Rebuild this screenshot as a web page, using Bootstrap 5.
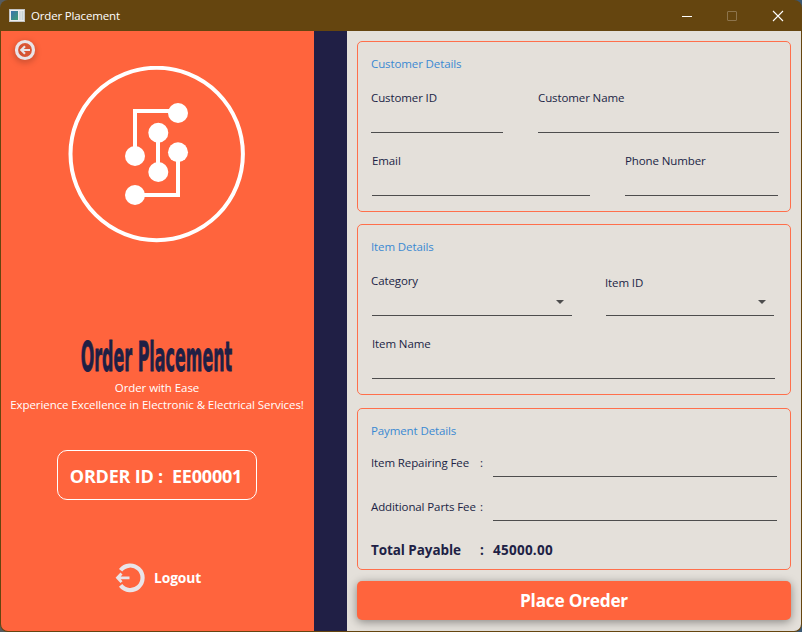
<!DOCTYPE html>
<html lang="en">
<head>
<meta charset="utf-8">
<meta name="viewport" content="width=device-width, initial-scale=1">
<title>Order Placement</title>
<link rel="stylesheet" href="https://cdn.jsdelivr.net/npm/bootstrap@5.3.0/dist/css/bootstrap.min.css">
<style>
:root{--coral:#ff643d;--ink:#201f45;--paper:#e4e0da;--frame:#65450f}
html,body{height:100%}
body{font:11.5px/16px "Open Sans","Noto Sans",sans-serif;letter-spacing:-.11px;color:var(--ink);background:linear-gradient(90deg,#565c60 0 50%,#3b5872 50%);overflow:hidden}
.app-window{width:802px;height:632px;background:var(--frame);border-radius:8px;padding:0 1px 1px}
.title-bar{height:31px;padding:0 17px 0 8px;color:#fff;letter-spacing:-.16px}
.title-bar .win-icon{margin-right:6px}
.win-controls{gap:34px}
.win-controls svg:first-child{margin-right:-1px}
.app-body{height:600px;border-radius:0 0 7px 7px}
.side-panel{width:313px;background:var(--coral);color:#fff}
.divider-band{width:33px;background:var(--ink)}
.form-panel{width:454px;background:var(--paper);padding:10px}
.back-btn{margin:5px 0 0 10px;width:28px;height:28px}
.back-btn svg{filter:drop-shadow(0 2px 3px rgba(0,0,0,.35))}
.back-btn svg,.logo-mark{display:block}
.logo-mark{margin:2px 0 0 67px}
.brand-title{font:bold 41px/50px "DejaVu Sans Condensed","DejaVu Sans",sans-serif;letter-spacing:0;color:var(--ink);-webkit-text-stroke:.8px var(--ink);transform:translate(-1px,1px) scaleX(.432);white-space:nowrap;margin:87px 0 0;height:48px}
.tagline{line-height:17px;letter-spacing:-.07px;white-space:nowrap;margin-left:-1px}
.order-id{width:200px;height:50px;border:1px solid #fff;border-radius:10px;font-size:18px;font-weight:700;letter-spacing:-.2px;margin:37px 0 0 56px;padding:2px 2px 0 0;white-space:pre}
.logout{margin:62px 0 0 113px;gap:8px;font-size:13.800px;font-weight:700;letter-spacing:-.1px}
.panel-box{border:1px solid #ff6f4b;border-radius:5px;padding:14px 11px 0 13px}
.box-tall{height:171px}
.box-item{margin-top:12px}
.box-pay{height:162px;margin-top:13px}
.panel-title{color:#3a89d2;height:34px}
.box-pay .panel-title{height:32px}
.field{border-bottom:1px solid #4d4d4d;white-space:nowrap}
.row-customer .field,.row-email .field,.row-category .field{height:43px}
.w-132{width:132px}.w-241{width:241px}.w-218{width:218px}.w-153{width:153px}
.w-200{width:200px}.w-168{width:168px}.w-403{width:403px}.w-284{width:284px}
.gap-35{gap:35px}.gap-34{gap:34px}
.row-email{margin:20px 0 0 1px}
.row-category{margin-left:1px}
.row-category .field:first-child span{margin-left:-1px}
.row-category .field:last-child span{margin:2px 0 0 -1px}
.item-name{margin:20px 0 0 1px;height:43px}
.caret{width:0;height:0;border:4px solid transparent;border-top-color:#4d4d4d;border-bottom:0;margin:27px 8px 0 0}
.fee-row{height:44px}
.fee-name{width:109px;white-space:nowrap}
.fee-colon{width:13px}
.fee-row .field{height:22px}
.total-row{font-size:13.500px;font-weight:700;line-height:20px;letter-spacing:-.08px;margin-top:-3px}
.total-value{letter-spacing:.25px}
.btn-place{height:39px;background:var(--coral);color:#fff;font:700 17.300px/24px "Open Sans",sans-serif;letter-spacing:-.25px;border:0;border-radius:5px;margin-top:11px;box-shadow:0 2px 10px rgba(0,0,0,.4)}
</style>
<script src="https://cdn.jsdelivr.net/npm/bootstrap@5.3.0/dist/js/bootstrap.bundle.min.js"></script>
</head>
<body>
<div class="app-window">
  <header class="title-bar d-flex align-items-center">
    <svg class="win-icon" width="16" height="14" viewBox="0 0 16 14"><defs><linearGradient id="scr" x1="0" y1="0" x2="1" y2="1"><stop stop-color="#3a71b0"/><stop offset="1" stop-color="#3f9d72"/></linearGradient></defs><rect x=".5" y=".5" width="15" height="12" fill="#eee" stroke="#c3c3c3"/><rect x="2" y="2" width="7" height="9" fill="url(#scr)"/><rect x="10" y="2" width="2" height="9" fill="#d5dcdf"/><rect x="12.5" y="2" width="2" height="9" fill="#c8d4d5"/></svg>
    <span>Order Placement</span>
    <div class="win-controls d-flex align-items-center ms-auto">
      <svg width="12" height="12"><path d="M1 6.500h10" stroke="#fff"/></svg>
      <svg width="12" height="12"><rect x="1.500" y="1.500" width="9" height="9" rx=".5" fill="none" stroke="#8d744c"/></svg>
      <svg width="12" height="12"><path d="M1 1l10 10M11 1L1 11" stroke="#fff" stroke-width="1.100"/></svg>
    </div>
  </header>
  <main class="app-body d-flex overflow-hidden">
    <section class="side-panel d-flex flex-column flex-shrink-0">
      <div class="back-btn">
        <svg width="28" height="30" viewBox="0 0 28 30" overflow="visible"><circle cx="14" cy="14" r="8.500" fill="none" stroke="#e9e4e8" stroke-width="3.200"/><path d="M19 14H10.500M14 10.300L10.300 14l3.700 3.700" fill="none" stroke="#e9e4e8" stroke-width="2.200"/></svg>
      </div>
      <svg class="logo-mark" width="178" height="178" viewBox="0 0 178 178" fill="none" stroke="#fff" stroke-width="4"><circle cx="88.700" cy="88" r="86.200"/><path d="M67 90V45h43M90 67v39M110 86v43H67"/><g fill="#fff" stroke="none"><circle cx="110" cy="47" r="10"/><circle cx="90.300" cy="66.700" r="10"/><circle cx="67" cy="90" r="10"/><circle cx="110" cy="86.300" r="10"/><circle cx="90.300" cy="106" r="10"/><circle cx="67" cy="129" r="10"/></g></svg>
      <h1 class="brand-title align-self-center">Order Placement</h1>
      <div class="tagline text-center">Order with Ease<br>Experience Excellence in Electronic &amp; Electrical Services!</div>
      <div class="order-id d-flex align-items-center justify-content-center">ORDER ID :  EE00001</div>
      <div class="logout d-flex align-items-center">
        <svg width="32" height="32" viewBox="0 0 32 32" fill="none" stroke="#e9e4e8"><path d="M6.600 8.200A12.300 12.300 0 1 1 6.600 23.400" stroke-width="4.200"/><path d="M15.500 15.800H4.500M7.500 11.500L3.500 15.800l4 4.300" stroke-width="2.800"/></svg>
        <span>Logout</span>
      </div>
    </section>
    <div class="divider-band flex-shrink-0"></div>
    <section class="form-panel flex-shrink-0">
      <div class="panel-box box-tall">
        <div class="panel-title">Customer Details</div>
        <div class="row-customer d-flex gap-35">
          <div class="field w-132">Customer ID</div>
          <div class="field w-241">Customer Name</div>
        </div>
        <div class="row-email d-flex gap-35">
          <div class="field w-218">Email</div>
          <div class="field w-153">Phone Number</div>
        </div>
      </div>
      <div class="panel-box box-tall box-item">
        <div class="panel-title">Item Details</div>
        <div class="row-category d-flex gap-34">
          <div class="field w-200 d-flex justify-content-between"><span>Category</span><i class="caret"></i></div>
          <div class="field w-168 d-flex justify-content-between"><span>Item ID</span><i class="caret"></i></div>
        </div>
        <div class="field item-name w-403">Item Name</div>
      </div>
      <div class="panel-box box-pay">
        <div class="panel-title">Payment Details</div>
        <div class="fee-row d-flex"><span class="fee-name">Item Repairing Fee</span><span class="fee-colon">:</span><div class="field w-284"></div></div>
        <div class="fee-row d-flex"><span class="fee-name">Additional Parts Fee</span><span class="fee-colon">:</span><div class="field w-284"></div></div>
        <div class="total-row d-flex"><span class="fee-name">Total Payable</span><span class="fee-colon">:</span><span class="total-value">45000.00</span></div>
      </div>
      <button class="btn btn-place w-100 p-0">Place Oreder</button>
    </section>
  </main>
</div>
</body>
</html>
